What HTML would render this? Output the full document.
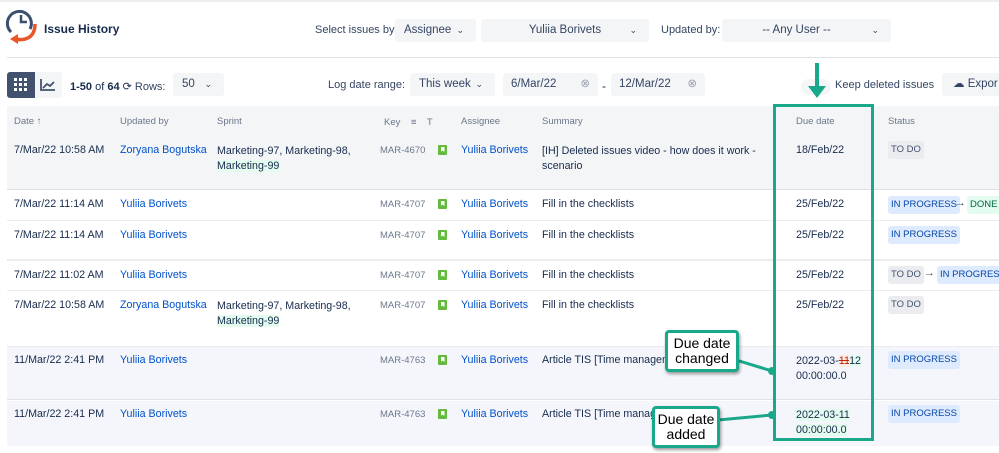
<!DOCTYPE html><html><head><style>
*{margin:0;padding:0;box-sizing:border-box}
body{width:999px;height:453px;background:#fff;font-family:"Liberation Sans",sans-serif;font-size:10.7px;color:#172b4d;position:relative;overflow:hidden}
.a{position:absolute;white-space:nowrap}
.sel{position:absolute;background:#f4f5f7;border-radius:3px;height:23px;font-size:11.5px;color:#344563;line-height:23px;white-space:nowrap}
.lb{font-size:11px;color:#344563}
.l{color:#0052cc}
.k{color:#6b778c;font-size:9.5px}
.g{background:#e3fcef}
.ic{position:absolute;width:9px;height:10px;background:#63ba3c;border-radius:1px}
.ic:after{content:"";position:absolute;left:2.5px;top:2px;width:4px;height:5px;background:#fff;clip-path:polygon(0 0,100% 0,100% 100%,50% 70%,0 100%)}
.lz{position:absolute;height:18px;line-height:18px;font-size:9.5px;padding:0 3px;border-radius:3px;white-space:nowrap}
.ip{background:#deebff;color:#0747a6}
.td{background:#ebecf0;color:#42526e}
.dn{background:#e3fcef;color:#006644}
.row{position:absolute;left:7px;width:992px}
.hd{color:#6b778c;font-size:9.5px}
.co{position:absolute;background:#fff;border:3px solid #1aa88a;border-radius:4px;font-size:14px;line-height:15px;text-align:center;color:#000;box-shadow:1px 2px 3px rgba(0,0,0,.4)}
.ch{font-size:9px;position:absolute;right:12px}
</style></head><body>
<div class="a" style="left:0;top:0;width:999px;height:2px;background:#eee"></div>
<svg class="a" style="left:5px;top:8px" width="32" height="36" viewBox="0 0 32 36"><path d="M6 24 A12 12 0 1 1 25 21" fill="none" stroke="#3b4f6e" stroke-width="3"/><path d="M16 7v7h6" fill="none" stroke="#3b4f6e" stroke-width="2.5"/><path d="M30 16 C30 30 20 33 10 31" fill="none" stroke="#e8562a" stroke-width="3.5"/><path d="M5 31 L13 26 L13 36Z" fill="#e8562a"/></svg>
<div class="a" style="left:44px;top:22px;font-size:12px;font-weight:bold;color:#172b4d">Issue History</div>
<div class="a lb" style="left:315px;top:24px">Select issues by:</div>
<div class="sel" style="left:395px;top:19px;width:81px;padding-left:9px">Assignee<span class="ch">⌄</span></div>
<div class="sel" style="left:481px;top:19px;width:168px;text-align:center">Yuliia Borivets<span class="ch">⌄</span></div>
<div class="a lb" style="left:661px;top:24px">Updated by:</div>
<div class="sel" style="left:722px;top:19px;width:169px;text-align:center;padding-right:20px">-- Any User --<span class="ch">⌄</span></div>
<div class="a" style="left:7px;top:57px;width:992px;height:1px;background:#dfe1e6"></div>
<div class="a" style="left:7px;top:72px;width:28px;height:26px;background:#42526e;border-radius:3px 0 0 3px"></div>
<svg class="a" style="left:14px;top:78px" width="14" height="14"><g fill="#fff"><rect x="0" y="0" width="3" height="3"/><rect x="5" y="0" width="3" height="3"/><rect x="10" y="0" width="3" height="3"/><rect x="0" y="5" width="3" height="3"/><rect x="5" y="5" width="3" height="3"/><rect x="10" y="5" width="3" height="3"/><rect x="0" y="10" width="3" height="3"/><rect x="5" y="10" width="3" height="3"/><rect x="10" y="10" width="3" height="3"/></g></svg>
<div class="a" style="left:35px;top:72px;width:27px;height:26px;background:#f4f5f7;border-radius:0 3px 3px 0"></div>
<svg class="a" style="left:40px;top:78px" width="16" height="14"><path d="M1 1v11h14M3 10l4-4 3 2 4-4" fill="none" stroke="#42526e" stroke-width="1.8"/></svg>
<div class="a" style="left:70px;top:80px;font-size:11px;color:#172b4d"><b>1-50</b> of <b>64</b> ⟳ <span style="color:#344563">Rows:</span></div>
<div class="sel" style="left:173px;top:73px;width:51px;padding-left:9px">50<span class="ch">⌄</span></div>
<div class="a lb" style="left:328px;top:79px">Log date range:</div>
<div class="sel" style="left:410px;top:73px;width:85px;padding-left:9px">This week<span class="ch">⌄</span></div>
<div class="sel" style="left:503px;top:73px;width:95px;padding-left:8px">6/Mar/22<span style="position:absolute;right:8px;color:#97a0af">⊗</span></div>
<div class="a" style="left:602px;top:79px;font-size:12px">-</div>
<div class="sel" style="left:611px;top:73px;width:94px;padding-left:8px">12/Mar/22<span style="position:absolute;right:8px;color:#97a0af">⊗</span></div>
<div class="a" style="left:801px;top:79px;width:30px;height:16px;border-radius:8px;background:#f4f5f7"></div>
<div class="a lb" style="left:835px;top:79px">Keep deleted issues</div>
<div class="sel" style="left:942px;top:73px;width:60px;padding-left:11px">☁ Expor</div>
<!-- header -->
<div class="row hd" style="top:106px;height:30px;background:#f4f5f7"></div>
<div class="a hd" style="left:14px;top:116px">Date ↑</div>
<div class="a hd" style="left:120px;top:116px">Updated by</div>
<div class="a hd" style="left:217px;top:116px">Sprint</div>
<div class="a hd" style="left:384px;top:117px">Key &nbsp;&nbsp; ≡ &nbsp;&nbsp; T</div>
<div class="a hd" style="left:461px;top:116px">Assignee</div>
<div class="a hd" style="left:542px;top:116px">Summary</div>
<div class="a hd" style="left:796px;top:116px">Due date</div>
<div class="a hd" style="left:888px;top:116px">Status</div>
<!-- row backgrounds -->
<div class="row" style="top:136px;height:54px;background:#f4f5f7;border-bottom:1px solid #dfe1e6"></div>
<div class="row" style="top:191px;height:30px;border-bottom:1px solid #ebecf0"></div>
<div class="row" style="top:222px;height:39px;border-bottom:2px solid #ebecf0"></div>
<div class="row" style="top:262px;height:29px;border-bottom:1px solid #ebecf0"></div>
<div class="row" style="top:346px;height:54px;background:#f4f6fb;border-top:1px solid #ebecf0;border-bottom:1px solid #dfe1e6"></div>
<div class="row" style="top:401px;height:45px;background:#f4f6fb"></div>
<!-- row1 -->
<div class="a" style="left:14px;top:144px">7/Mar/22 10:58 AM</div>
<div class="a l" style="left:120px;top:144px">Zoryana Bogutska</div>
<div class="a" style="left:217px;top:144px;line-height:15px">Marketing-97, Marketing-98,<br><span class="g">Marketing-99</span></div>
<div class="a k" style="left:380px;top:145px">MAR-4670</div><div class="ic" style="left:438px;top:145px"></div>
<div class="a l" style="left:461px;top:144px">Yuliia Borivets</div>
<div class="a" style="left:542px;top:144px;line-height:15px">[IH] Deleted issues video - how does it work -<br>scenario</div>
<div class="a" style="left:796px;top:144px">18/Feb/22</div>
<div class="lz td" style="left:888px;top:141px">TO DO</div>
<!-- row2 -->
<div class="a" style="left:14px;top:198px">7/Mar/22 11:14 AM</div><div class="a l" style="left:120px;top:198px">Yuliia Borivets</div>
<div class="a k" style="left:380px;top:199px">MAR-4707</div><div class="ic" style="left:438px;top:199px"></div>
<div class="a l" style="left:461px;top:198px">Yuliia Borivets</div><div class="a" style="left:542px;top:198px">Fill in the checklists</div>
<div class="a" style="left:796px;top:198px">25/Feb/22</div>
<div class="lz ip" style="left:888px;top:196px">IN PROGRESS</div><div class="a" style="left:955px;top:197px;color:#42526e">→</div><div class="lz dn" style="left:967px;top:196px">DONE</div>
<!-- row3 -->
<div class="a" style="left:14px;top:229px">7/Mar/22 11:14 AM</div><div class="a l" style="left:120px;top:229px">Yuliia Borivets</div>
<div class="a k" style="left:380px;top:230px">MAR-4707</div><div class="ic" style="left:438px;top:230px"></div>
<div class="a l" style="left:461px;top:229px">Yuliia Borivets</div><div class="a" style="left:542px;top:229px">Fill in the checklists</div>
<div class="a" style="left:796px;top:229px">25/Feb/22</div>
<div class="lz ip" style="left:888px;top:226px">IN PROGRESS</div>
<!-- row4 -->
<div class="a" style="left:14px;top:269px">7/Mar/22 11:02 AM</div><div class="a l" style="left:120px;top:269px">Yuliia Borivets</div>
<div class="a k" style="left:380px;top:270px">MAR-4707</div><div class="ic" style="left:438px;top:270px"></div>
<div class="a l" style="left:461px;top:269px">Yuliia Borivets</div><div class="a" style="left:542px;top:269px">Fill in the checklists</div>
<div class="a" style="left:796px;top:269px">25/Feb/22</div>
<div class="lz td" style="left:888px;top:266px">TO DO</div><div class="a" style="left:924px;top:267px;color:#42526e">→</div><div class="lz ip" style="left:937px;top:266px">IN PROGRESS</div>
<!-- row5 -->
<div class="a" style="left:14px;top:299px">7/Mar/22 10:58 AM</div><div class="a l" style="left:120px;top:299px">Zoryana Bogutska</div>
<div class="a" style="left:217px;top:299px;line-height:15px">Marketing-97, Marketing-98,<br><span class="g">Marketing-99</span></div>
<div class="a k" style="left:380px;top:300px">MAR-4707</div><div class="ic" style="left:438px;top:300px"></div>
<div class="a l" style="left:461px;top:299px">Yuliia Borivets</div><div class="a" style="left:542px;top:299px">Fill in the checklists</div>
<div class="a" style="left:796px;top:299px">25/Feb/22</div>
<div class="lz td" style="left:888px;top:296px">TO DO</div>
<!-- row6 -->
<div class="a" style="left:14px;top:354px">11/Mar/22 2:41 PM</div><div class="a l" style="left:120px;top:354px">Yuliia Borivets</div>
<div class="a k" style="left:380px;top:355px">MAR-4763</div><div class="ic" style="left:438px;top:355px"></div>
<div class="a l" style="left:461px;top:354px">Yuliia Borivets</div><div class="a" style="left:542px;top:354px">Article TIS [Time managem</div>
<div class="a" style="left:796px;top:354px;line-height:15px">2022-03-<span style="background:#ffebe6;text-decoration:line-through;color:#bf2600">11</span><span class="g">12</span><br>00:00:00.0</div>
<div class="lz ip" style="left:888px;top:351px">IN PROGRESS</div>
<!-- row7 -->
<div class="a" style="left:14px;top:408px">11/Mar/22 2:41 PM</div><div class="a l" style="left:120px;top:408px">Yuliia Borivets</div>
<div class="a k" style="left:380px;top:409px">MAR-4763</div><div class="ic" style="left:438px;top:409px"></div>
<div class="a l" style="left:461px;top:408px">Yuliia Borivets</div><div class="a" style="left:542px;top:408px">Article TIS [Time manag</div>
<div class="a" style="left:796px;top:408px;line-height:15px"><span class="g">2022-03-11</span><br><span class="g">00:00:00.0</span></div>
<div class="lz ip" style="left:888px;top:405px">IN PROGRESS</div>
<!-- annotations -->
<div class="a" style="left:773px;top:104px;width:101px;height:337px;border:3px solid #1aa88a"></div>
<svg class="a" style="left:805px;top:62px" width="24" height="40"><path d="M12 1v26" stroke="#1aa88a" stroke-width="4"/><path d="M3 24h18l-9 12z" fill="#1aa88a"/></svg>
<svg class="a" style="left:600px;top:320px" width="200" height="133"><path d="M136 40L172 51" stroke="#1aa88a" stroke-width="3"/><circle cx="172" cy="51" r="4" fill="#1aa88a"/><path d="M118 100L172 95" stroke="#1aa88a" stroke-width="3"/><circle cx="172" cy="95" r="4" fill="#1aa88a"/></svg>
<div class="co" style="left:665px;top:330px;width:74px;height:42px;padding-top:3px">Due date<br>changed</div>
<div class="co" style="left:652px;top:406px;width:68px;height:42px;padding-top:3px">Due date<br>added</div>
</body></html>
